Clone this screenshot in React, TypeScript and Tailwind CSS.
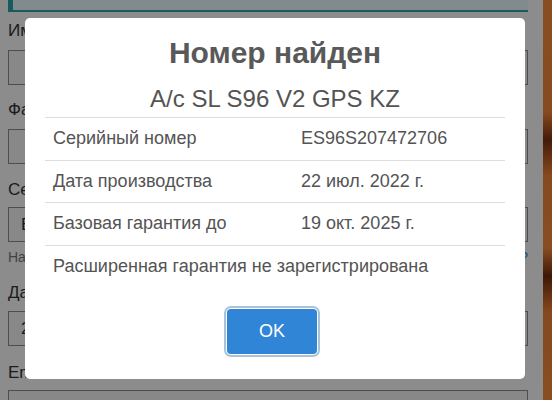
import React from "react";

const font = { fontFamily: '"Liberation Sans", Arial, sans-serif' };

function Label({ text, mt }: { text: string; mt: string }) {
  return (
    <div className={`${mt} h-[24px] text-[17px] leading-[24px] text-[#333]`}>{text}</div>
  );
}

function Input({ mt, value }: { mt: string; value?: string }) {
  return (
    <div className={`${mt} h-[35px] border border-[#8a8a8a] bg-[#f2f2f2] pl-[12px] text-[17px] leading-[33px] text-[#333]`}>
      {value}
    </div>
  );
}

function Row({ k, v }: { k: string; v?: string }) {
  return (
    <div className="flex border-t border-[#dddddd] text-[18px] leading-[25.7px] text-[#545454]">
      <div className={v ? "w-[248px] shrink-0 px-[8px] py-[8px]" : "px-[8px] py-[8px]"}>{k}</div>
      {v && <div className="px-[8px] py-[8px]">{v}</div>}
    </div>
  );
}

export default function App() {
  return (
    <div className="relative h-[400px] w-[552px] overflow-hidden bg-white" style={font}>
      {/* background page */}
      <div className="flex h-full">
        <div className="w-[543px] shrink-0 bg-[#fafafa] pl-[8px] pr-[15px]">
          <div className="h-[12px] border-b-2 border-l-[5px] border-[#2aa3ad] bg-[#e6f7fa]" />
          <Label text="Имя" mt="mt-[7px]" />
          <Input mt="mt-[7px]" />
          <Label text="Фамилия" mt="mt-[13px]" />
          <Input mt="mt-[7px]" />
          <Label text="Серийный номер" mt="mt-[14px]" />
          <Input mt="mt-[5px]" value="ES96S207472706" />
          <div className="mt-[5px] flex h-[20px] justify-between text-[14px] leading-[20px] text-[#777]">
            <span>Например: ES96S000000000</span>
            <span className="text-[#3085d6]">?</span>
          </div>
          <Label text="Дата покупки" mt="mt-[14px]" />
          <Input mt="mt-[6px]" value="22.07.2022" />
          <Label text="Email" mt="mt-[15px]" />
          <Input mt="mt-[5px]" />
        </div>
        <div className="flex-1 bg-[linear-gradient(180deg,#f48a3c_0%,#f2863a_28%,#7a3010_35%,#f0843a_44%,#f38a3e_62%,#6e2a0c_69%,#ef8238_78%,#f48a3c_100%)]" />
      </div>

      {/* overlay */}
      <div className="absolute inset-0 bg-black/[0.44]" />

      {/* modal */}
      <div className="absolute left-[25px] top-[18px] flex h-[361px] w-[500px] flex-col rounded-[5px] bg-white px-[20px]">
        <div className="mt-[17px] text-center text-[30px] font-bold leading-[36px] text-[#595959]">
          Номер найден
        </div>
        <div className="mt-[13px] text-center text-[24px] leading-[30px] text-[#545454]">
          A/c SL S96 V2 GPS KZ
        </div>
        <div className="mt-[3px] flex flex-col">
          <Row k="Серийный номер" v="ES96S207472706" />
          <Row k="Дата производства" v="22 июл. 2022 г." />
          <Row k="Базовая гарантия до" v="19 окт. 2025 г." />
          <Row k="Расширенная гарантия не зарегистрирована" />
        </div>
        <div className="mt-[21px] flex justify-center">
          <button className="ml-[-6px] h-[45px] w-[90px] rounded-[4px] bg-[#3085d6] text-[18px] text-white shadow-[0_0_0_1px_#ffffff,0_0_0_3px_#a9c3da]">
            OK
          </button>
        </div>
      </div>
    </div>
  );
}
